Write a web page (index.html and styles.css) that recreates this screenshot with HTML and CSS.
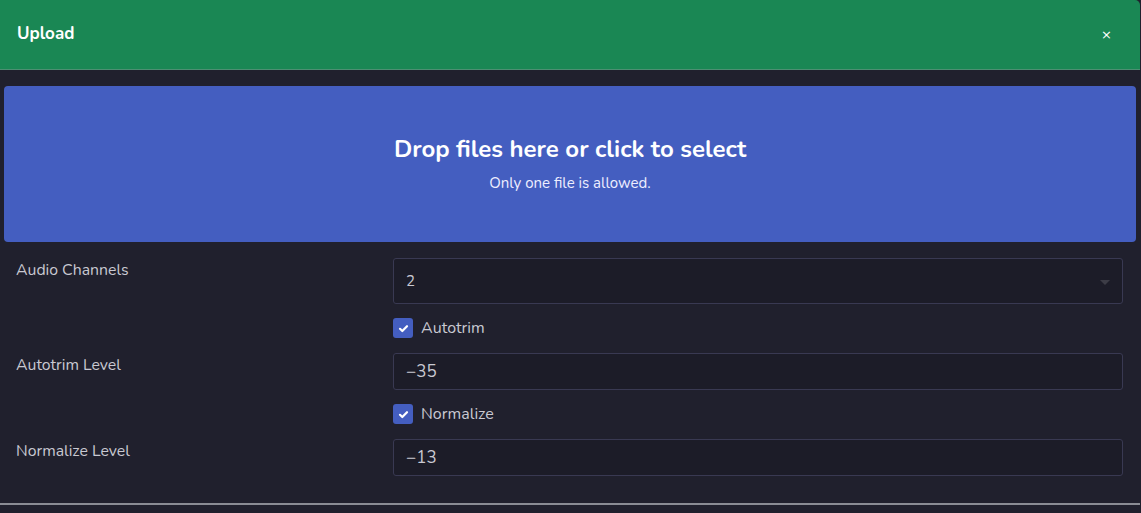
FILE: index.html
```html
<!DOCTYPE html>
<html>
<head>
<meta charset="utf-8">
<link rel="stylesheet" href="styles.css">
</head>
<body>
<div class="modal">
  <header class="modal-header">
    <h1 class="title">Upload</h1>
    <button class="close" aria-label="Close">&times;</button>
  </header>
  <div class="modal-body">
    <div class="dropzone">
      <div class="dz-title">Drop files here or click to select</div>
      <div class="dz-sub">Only one file is allowed.</div>
    </div>
    <div class="form">
      <div class="row">
        <label class="label">Audio Channels</label>
        <div class="control">
          <div class="select">
            <span>2</span>
            <span class="caret"></span>
          </div>
        </div>
      </div>
      <div class="row check-row">
        <div></div>
        <div class="control check">
          <span class="box"><svg width="11" height="9" viewBox="0 0 11 9"><path d="M2 4.8 L4.3 7 L9 2.2" fill="none" stroke="#fff" stroke-width="2.2" stroke-linecap="round" stroke-linejoin="round"/></svg></span>
          <span class="check-label">Autotrim</span>
        </div>
      </div>
      <div class="row">
        <label class="label">Autotrim Level</label>
        <div class="control"><div class="input">−35</div></div>
      </div>
      <div class="row check-row">
        <div></div>
        <div class="control check">
          <span class="box"><svg width="11" height="9" viewBox="0 0 11 9"><path d="M2 4.8 L4.3 7 L9 2.2" fill="none" stroke="#fff" stroke-width="2.2" stroke-linecap="round" stroke-linejoin="round"/></svg></span>
          <span class="check-label">Normalize</span>
        </div>
      </div>
      <div class="row">
        <label class="label">Normalize Level</label>
        <div class="control"><div class="input">−13</div></div>
      </div>
    </div>
  </div>
  <div class="footer-line"></div>
</div>
</body>
</html>
```
FILE: styles.css
```css
* { box-sizing: border-box; }
html, body { margin: 0; padding: 0; }
body {
  background: #20202d;
  font-family: "Nunito", "Lato", "Noto Sans", sans-serif;
  color: #d4d4dc;
  width: 1141px;
  height: 513px;
  overflow: hidden;
}
.modal { width: 1140px; }
.modal-header {
  height: 70px;
  background: #1a8754;
  border-bottom: 1px solid #4d8f72;
  display: flex;
  align-items: center;
  justify-content: space-between;
  padding: 0 16px 0 17px;
  border-top-right-radius: 5px;
}
.title {
  margin: 0 0 2px 0;
  font-size: 17px;
  font-weight: 700;
  color: #fff;
}
.close {
  background: none;
  border: 0;
  color: #fff;
  font-size: 13px;
  line-height: 1;
  padding: 0;
  margin-right: 12px;
  font-family: "DejaVu Sans", sans-serif;
}
.modal-body { padding: 16px 4px 0 4px; }
.dropzone {
  height: 156px;
  background: #445ec0;
  border-radius: 4px;
  display: flex;
  flex-direction: column;
  align-items: center;
  justify-content: center;
  color: #fff;
  width: 1132px;
}
.dz-title { font-size: 24px; font-weight: 700; margin-top: -2px; }
.dz-sub { font-size: 15px; margin-top: 8px; color: #eef; }
.form { padding: 16px 13px 0 12px; }
.row {
  display: grid;
  grid-template-columns: 377px 730px;
}
.label {
  font-size: 15.8px;
  color: #c9c9d2;
  padding-top: 1px;
}
.select {
  height: 46px;
  background: #1c1c28;
  border: 1px solid #393952;
  border-radius: 3px;
  display: flex;
  align-items: center;
  justify-content: space-between;
  padding: 0 12px;
  font-size: 15px;
  color: #c9c9d2;
}
.caret {
  width: 0; height: 0;
  border-left: 5px solid transparent;
  border-right: 5px solid transparent;
  border-top: 5px solid #3c3c46;
  margin-top: 2px;
}
.check-row { margin-top: 13px; margin-bottom: 14px; }
.check { display: flex; align-items: center; gap: 8px; }
.box {
  width: 20px; height: 20px;
  background: #445ec0;
  border-radius: 3px;
  display: flex; align-items: center; justify-content: center;
}
.check-label { font-size: 16px; color: #c9c9d2; }
.input {
  height: 37px;
  background: #1c1c28;
  border: 1px solid #393952;
  border-radius: 3px;
  display: flex;
  align-items: center;
  padding: 0 12px;
  font-size: 17px;
  color: #c9c9d2;
}
.footer-line {
  margin-top: 27px;
  height: 2px;
  background: #8a8c94;
  width: 1140px;
}
```
